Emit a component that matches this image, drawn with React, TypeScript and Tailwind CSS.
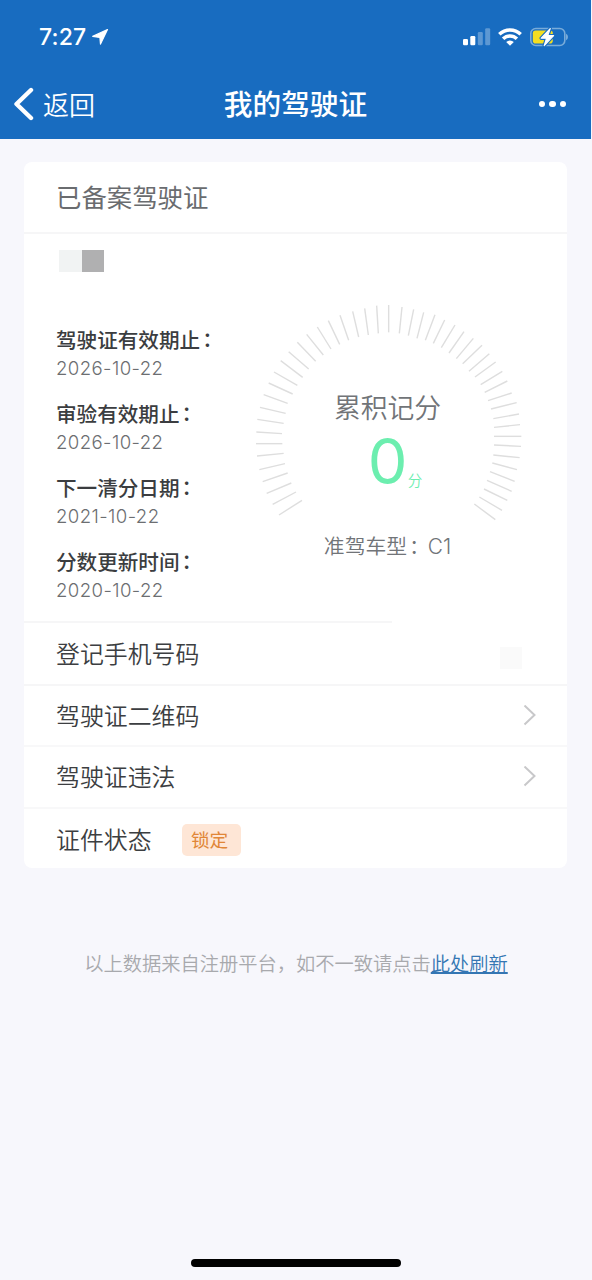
import { clsx } from "clsx";

interface LicenseDate {
  label: string;
  value: string;
}

const LICENSE_DATES: LicenseDate[] = [
  { label: "驾驶证有效期止", value: "2026-10-22" },
  { label: "审验有效期止", value: "2026-10-22" },
  { label: "下一清分日期", value: "2021-10-22" },
  { label: "分数更新时间", value: "2020-10-22" },
];

// Gauge ticks as [outerX, outerY, innerX, innerY], clockwise from bottom left
const TICKS: [number, number, number, number][] = [
  [117, 675, 186, 631], [98, 643, 168, 606], [80, 610, 154, 579],
  [68, 575, 143, 549], [58, 539, 135, 521], [51, 498, 131, 490],
  [48, 461, 127, 461], [49, 426, 126, 431], [52, 388, 131, 400],
  [60, 352, 137, 370], [71, 314, 143, 340], [86, 279, 158, 312],
  [102, 246, 172, 286], [122, 212, 188, 262], [146, 185, 206, 237],
  [172, 157, 227, 214], [200, 133, 250, 195], [232, 111, 273, 177],
  [265, 92, 299, 163], [300, 76, 326, 151], [338, 64, 356, 141],
  [374, 55, 385, 135], [410, 47, 415, 130], [446, 45, 446, 127],
  [486, 51, 478, 130], [521, 58, 505, 137], [551, 67, 531, 145],
  [585, 74, 556, 151], [614, 90, 580, 160], [645, 105, 604, 173],
  [672, 125, 627, 189], [700, 145, 649, 206], [726, 166, 668, 221],
  [748, 191, 687, 244], [767, 216, 705, 261], [787, 244, 722, 284],
  [802, 273, 734, 307], [815, 309, 744, 332], [830, 338, 753, 357],
  [837, 372, 760, 386], [840, 404, 762, 412], [844, 439, 762, 439],
  [843, 469, 762, 465], [839, 503, 760, 495], [831, 539, 757, 519],
  [824, 574, 750, 545], [815, 604, 741, 571], [802, 631, 732, 597],
  [786, 661, 718, 621], [766, 689, 703, 642],
];

const BOLT = "M20.2 1.6 11.2 11.2h5.4L14.2 18.6 23.6 8.6h-5.8Z";

const StatusBar = () => (
  <div className="flex h-[74px] items-center justify-between pl-[39px] pr-[22px]">
    <div className="flex items-center gap-[5px]">
      <span className="text-[23px] leading-none font-medium tracking-[0.2px]">
        7:27
      </span>
      <svg
        width="18"
        height="18"
        viewBox="-0.5 -0.5 18 18"
        fill="currentColor"
        stroke="currentColor"
        strokeWidth="1.2"
        strokeLinejoin="round"
      >
        <path d="M16 1 9 15.6 8.4 9 1.2 7.9Z" />
      </svg>
    </div>
    <div className="flex items-center">
      {/* Cellular */}
      <svg width="28" height="18" viewBox="0 0 28 18" fill="currentColor">
        <rect x="0" y="11" width="5" height="6.3" rx="1.2" />
        <rect x="7.3" y="8" width="5" height="9.3" rx="1.2" />
        <rect x="14.8" y="4" width="5" height="13.3" rx="1.2" opacity=".3" />
        <rect x="22.2" y="0.3" width="5" height="17" rx="1.2" opacity=".3" />
      </svg>
      {/* Wi-Fi */}
      <svg
        className="ml-[7px]"
        width="24"
        height="18"
        viewBox="0 0 24 18"
        fill="none"
        stroke="currentColor"
        strokeWidth="3.5"
      >
        <path d="M1.3 6.3a15.2 15.2 0 0 1 21.4 0" />
        <path d="M5.1 10.8a9.8 9.8 0 0 1 13.8 0" />
        <path
          d="M8.2 14a5.4 5.4 0 0 1 7.6 0L12 17.8Z"
          fill="currentColor"
          stroke="none"
        />
      </svg>
      {/* Battery */}
      <svg className="ml-[8px]" width="39" height="20" viewBox="0 0 39 20">
        <rect x="0.8" y="1.5" width="34" height="17" rx="5" fill="none" stroke="#78abd9" strokeWidth="1.6" />
        <path d="M36 6.8q2 1 2 3.2t-2 3.2Z" fill="#78abd9" />
        <rect x="2.8" y="3.5" width="20" height="13" rx="2.8" fill="#f4de20" />
        <path d={BOLT} fill="#186cc0" stroke="#186cc0" strokeWidth="3.4" strokeLinejoin="round" />
        <path d={BOLT} fill="#fff" stroke="#fff" strokeWidth="1.2" strokeLinejoin="round" />
      </svg>
    </div>
  </div>
);

const NavBar = () => (
  <div className="grid h-[60px] grid-cols-[1fr_auto_1fr] items-center pl-[13px] pr-[25px]">
    <div className="flex items-center gap-[9px]">
      <svg
        width="21"
        height="34"
        viewBox="0 0 21 34"
        fill="none"
        stroke="currentColor"
        strokeWidth="4.4"
        strokeLinecap="round"
        strokeLinejoin="round"
      >
        <path d="M18 3 3.5 17 18 31" />
      </svg>
      <span className="pt-[3px] text-[26px] leading-none font-[350]">返回</span>
    </div>
    <h1 className="pt-[2px] pl-[12px] text-[28.7px] leading-none font-medium">
      我的驾驶证
    </h1>
    <div className="flex justify-end gap-[4px]">
      <span className="size-[6.5px] rounded-full bg-white" />
      <span className="size-[6.5px] rounded-full bg-white" />
      <span className="size-[6.5px] rounded-full bg-white" />
    </div>
  </div>
);

const ScoreGauge = () => (
  <div className="relative mt-[69px] h-[262px] w-[268px]">
    <svg
      width="268"
      height="219"
      viewBox="45 39 804 657"
      stroke="#dedede"
      strokeWidth="4.2"
    >
      {TICKS.map(([x1, y1, x2, y2]) => (
        <line key={`${x1}-${y1}`} x1={x1} y1={y1} x2={x2} y2={y2} />
      ))}
    </svg>
    <div className="absolute -left-[3px] right-0 top-[91px] flex flex-col items-center text-[#717478]">
      <span className="text-[26.8px] leading-[28px] font-[350]">累积记分</span>
      <div className="relative mt-[11px] text-[#6ceeaf]">
        <span className="block text-[63px] leading-[56px]">0</span>
        <span className="absolute -bottom-px left-[40px] text-[14.5px] leading-[18px] font-[350]">
          分
        </span>
      </div>
      <span className="mt-[45px] text-[20.8px] leading-[26px] font-[350] whitespace-nowrap">
        准驾车型<span className="relative left-[2px]">：</span>C1
      </span>
    </div>
  </div>
);

const Chevron = () => (
  <svg
    width="14"
    height="22"
    viewBox="0 0 14 22"
    fill="none"
    stroke="#c8c8ca"
    strokeWidth="2"
  >
    <path d="M1.5 0.5 11.5 10 1.5 19.5" />
  </svg>
);

interface RowProps {
  label: string;
  className?: string;
  children?: React.ReactNode;
}

const Row = ({ label, className, children }: RowProps) => (
  <div
    className={clsx(
      "flex items-center pl-[32px] pr-[30px] text-[23.9px] leading-none text-[#3c3e41]",
      className,
    )}
  >
    <span className="pt-[2px] font-[350]">{label}</span>
    {children}
  </div>
);

export default function App() {
  return (
    <div className="flex h-[1280px] w-[592px] flex-col bg-[#f7f7fc] font-['Inter','Noto_Sans_CJK_SC',sans-serif]">
      <header className="mr-px h-[139px] bg-[#186cc0] text-white">
        <StatusBar />
        <NavBar />
      </header>

      <main className="mx-[24px] mt-[23px] h-[706px] w-[543px] overflow-hidden rounded-[8px] bg-white">
        <h2 className="flex h-[72px] items-center border-b-2 border-[#f6f6f7] pt-[2px] pl-[32px] text-[25.4px] leading-none text-[#6a6c6f]">
          已备案驾驶证
        </h2>

        <section className="flex h-[387px] justify-between pl-[32px] pr-[44px]">
          <div>
            {/* Masked holder name */}
            <div className="mt-[16px] ml-[3px] flex">
              <div className="h-[22px] w-[23px] bg-[#f1f3f3]" />
              <div className="h-[22px] w-[22px] bg-[#b0b0b1]" />
            </div>
            <dl className="mt-[54px]">
              {LICENSE_DATES.map((item) => (
                <div key={item.label} className="h-[74px] whitespace-nowrap">
                  <dt className="text-[20.6px] leading-[29px] font-medium text-[#3b3d40]">
                    {item.label}
                    <span className="relative -top-px left-[2px]">：</span>
                  </dt>
                  <dd className="text-[18.6px] leading-[26px] font-[350] tracking-[0.4px] text-[#6c6e71]">
                    {item.value}
                  </dd>
                </div>
              ))}
            </dl>
          </div>
          <ScoreGauge />
        </section>

        <div className="h-[2px] w-[368px] bg-[#f6f6f7]" />
        <Row label="登记手机号码" className="h-[63px] justify-between border-b-2 border-[#f6f6f7]">
          <div className="mt-[8px] mr-[15px] size-[22px] bg-[#fafafa]" />
        </Row>
        <Row label="驾驶证二维码" className="h-[61px] justify-between border-b-2 border-[#f8f8f9]">
          <Chevron />
        </Row>
        <Row label="驾驶证违法" className="h-[62px] justify-between border-b-2 border-[#f8f8f9]">
          <Chevron />
        </Row>
        <Row label="证件状态" className="h-[62px] gap-[30px]">
          <span className="flex h-[32px] w-[59px] items-center justify-center rounded-[5px] bg-[#fee6d6] pr-[3px] pt-[2px] text-[18.7px] text-[#e18637]">
            锁定
          </span>
        </Row>
      </main>

      <footer className="mt-[82px] text-center text-[19.25px] leading-[28px] font-[350] text-[#a8a9ad]">
        以上数据来自注册平台，如不一致请点击
        <a href="#" className="text-[#3476b3] underline decoration-[1.5px] underline-offset-[1px]">
          此处刷新
        </a>
      </footer>

      {/* Home indicator */}
      <div className="mx-auto mt-auto mb-[13px] h-[8px] w-[210px] rounded-full bg-black" />
    </div>
  );
}
